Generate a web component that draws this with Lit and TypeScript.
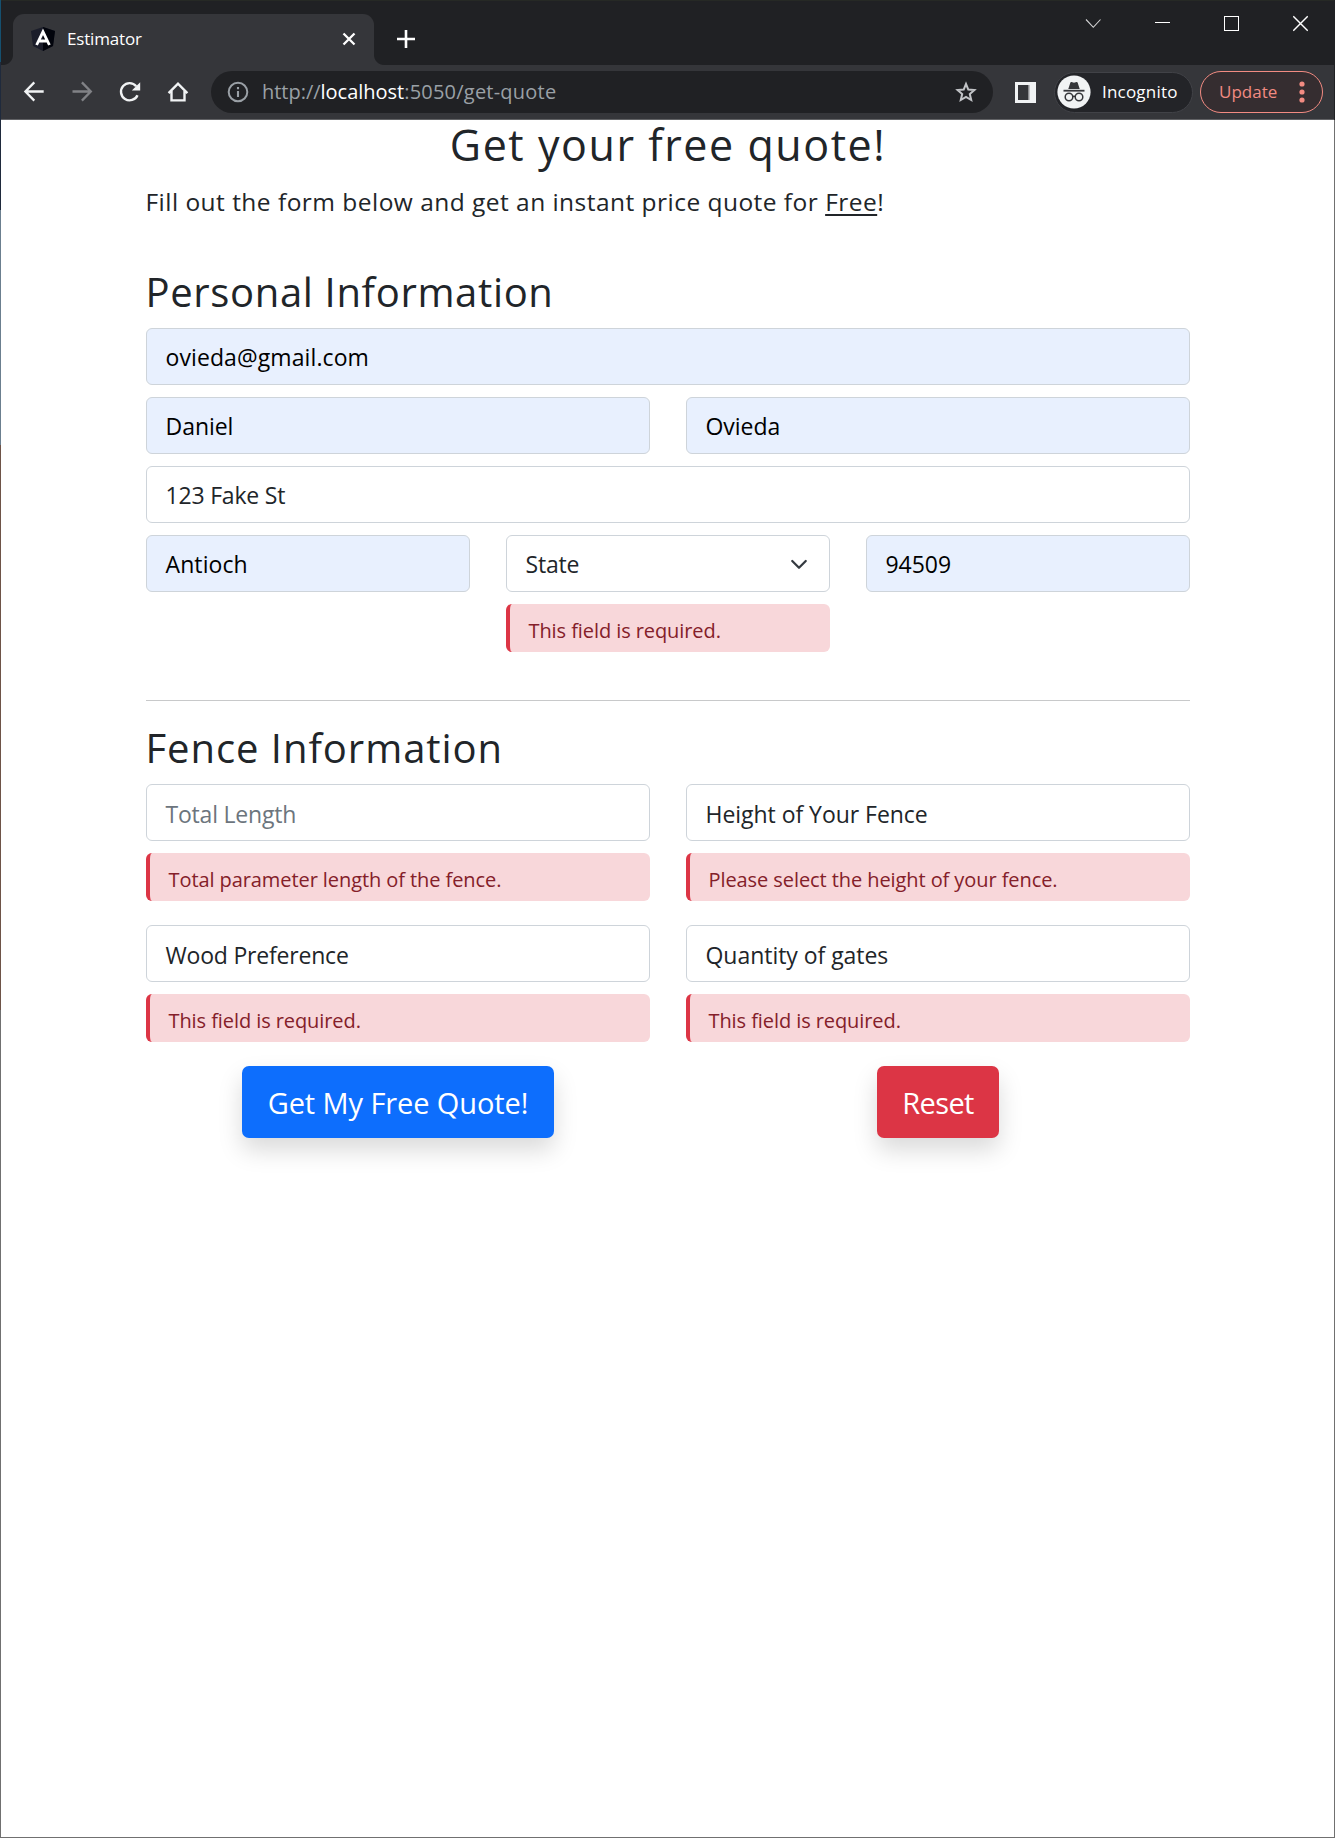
import { LitElement, html, css, nothing } from "lit";
import { customElement, property } from "lit/decorators.js";

/** Browser tab strip and toolbar. */
@customElement("browser-chrome")
export class BrowserChrome extends LitElement {
  static styles = css`
    :host {
      display: block;
      height: 120px;
      box-sizing: border-box;
      background: #35363a;
      border-bottom: 1px solid #616265;
      font-family: "Open Sans", "Noto Sans", sans-serif;
      color: #fff;
    }
    svg {
      display: block;
      flex: none;
    }
    .strip {
      height: 65px;
      box-sizing: border-box;
      background: #202124;
      display: flex;
      align-items: flex-start;
      padding-left: 3px;
      border-top: 1px solid #262925;
    }
    .foot {
      width: 10px;
      height: 10px;
      align-self: flex-end;
    }
    .foot-left {
      background: radial-gradient(circle at 0 0, #202124 9.5px, #35363a 10.5px);
      margin-left: -1px;
    }
    .foot-right {
      background: radial-gradient(circle at 100% 0, #202124 9.5px, #35363a 10.5px);
    }
    .tab {
      width: 361px;
      height: 51px;
      margin-top: 13px;
      box-sizing: border-box;
      background: #35363a;
      border-radius: 11px 11px 0 0;
      display: flex;
      align-items: center;
      padding: 0 18px 1px;
    }
    .tab-title {
      flex: 1;
      margin-left: 12px;
      font-size: 17px;
      line-height: 24px;
      letter-spacing: -0.18px;
    }
    .new-tab {
      margin: 28px 0 0 12px;
    }
    .window-controls {
      margin-left: auto;
      display: flex;
      gap: 54px;
      padding: 14px 26px 0 0;
    }
    .toolbar {
      height: 54px;
      display: flex;
      align-items: center;
      padding-left: 22px;
    }
    .nav {
      display: flex;
      gap: 26px;
    }
    .address {
      width: 782px;
      height: 42px;
      margin-left: 22px;
      box-sizing: border-box;
      border-radius: 21px;
      background: #202124;
      display: flex;
      align-items: center;
      padding: 0 16px;
    }
    .url {
      flex: 1;
      margin-left: 13px;
      font-size: 20px;
      line-height: 40px;
      letter-spacing: -0.02px;
      color: #9aa0a6;
      white-space: nowrap;
    }
    .host {
      color: #fff;
    }
    .path {
      letter-spacing: 0.22px;
    }
    .panel {
      margin-left: 22px;
    }
    .incognito {
      width: 139px;
      height: 41px;
      margin-left: 18px;
      box-sizing: border-box;
      border: 1px solid #414247;
      border-radius: 21px;
      background: #232428;
      display: flex;
      align-items: center;
      padding-left: 2px;
      font-size: 17px;
      letter-spacing: 0.2px;
    }
    .label {
      margin-left: 11px;
      line-height: 36px;
    }
    .update {
      width: 123px;
      height: 42px;
      margin-left: 7px;
      box-sizing: border-box;
      border: 1.5px solid #f28b82;
      border-radius: 21px;
      background: #352d30;
      color: #f28b82;
      display: flex;
      align-items: center;
      padding: 0 17px 1px 18px;
      font-size: 17px;
      justify-content: space-between;
    }
  `;

  render() {
    return html`
      <div class="strip">
        <span class="foot foot-left"></span>
        <div class="tab">
          <svg width="24" height="24" viewBox="0 0 24 24">
            <path d="M12 0 L24 4 L22 19 L12 24 L2 19 L0 4 Z" fill="#1b1d2a" />
            <path d="M12 0 L24 4 L22 19 L12 24 Z" fill="#02040c" />
            <path d="M5.6 18 L12 4.8 L18.4 18 M8.5 14 H15.5" fill="none" stroke="#fff" stroke-width="2.8" />
          </svg>
          <span class="tab-title">Estimator</span>
          <svg width="14" height="14" viewBox="0 0 14 14">
            <path d="M1.5 1.5 L12.5 12.5 M12.5 1.5 L1.5 12.5" stroke="#fff" stroke-width="2.3" />
          </svg>
        </div>
        <span class="foot foot-right"></span>
        <svg class="new-tab" width="20" height="20" viewBox="0 0 20 20">
          <path d="M10 1 V19 M1 10 H19" stroke="#fff" stroke-width="2.6" />
        </svg>
        <div class="window-controls">
          <svg width="16" height="18" viewBox="0 0 16 18">
            <path d="M1 4.5 L8.3 12.3 L15.5 4.5" fill="none" stroke="#d5d5d6" stroke-width="1.1" />
          </svg>
          <svg width="15" height="18" viewBox="0 0 15 18">
            <path d="M0 7.5 H15" stroke="#fff" stroke-width="1" />
          </svg>
          <svg width="15" height="18" viewBox="0 0 15 18">
            <rect x="0.5" y="1.5" width="14" height="14" fill="none" stroke="#fff" />
          </svg>
          <svg width="15" height="18" viewBox="0 0 15 18">
            <path d="M0.3 1.3 L14.7 15.7 M14.7 1.3 L0.3 15.7" stroke="#fff" stroke-width="1.3" />
          </svg>
        </div>
      </div>
      <div class="toolbar">
        <div class="nav">
          <svg width="22" height="22" viewBox="0 0 22 22">
            <path d="M20.7 10.5 H3 M11.3 1.4 L2.4 10.5 L11.3 19.6" fill="none" stroke="#f1f3f4" stroke-width="2.3" />
          </svg>
          <svg width="22" height="22" viewBox="0 0 22 22">
            <path d="M1.5 10.5 H19.2 M10.9 1.4 L19.8 10.5 L10.9 19.6" fill="none" stroke="#818286" stroke-width="2.3" />
          </svg>
          <svg width="22" height="22" viewBox="0 0 22 22">
            <path d="M18.5 14.2 A8.6 8.6 0 1 1 17.2 5.2" fill="none" stroke="#f1f3f4" stroke-width="2.4" />
            <path d="M21.2 1.2 V9.4 H12.8 Z" fill="#f1f3f4" />
          </svg>
          <svg width="22" height="22" viewBox="0 0 22 22">
            <path d="M1.6 12.1 L11 2.6 L20.4 12.1 M4.5 10 V19.4 H17.5 V10" fill="none" stroke="#f1f3f4" stroke-width="2.4" />
          </svg>
        </div>
        <div class="address">
          <svg width="22" height="22" viewBox="0 0 22 22">
            <circle cx="11" cy="11" r="9.3" fill="none" stroke="#9aa0a6" stroke-width="2" />
            <path d="M11 10 V16 M11 6 V8.2" stroke="#9aa0a6" stroke-width="2.1" />
          </svg>
          <span class="url">http://<span class="host">localhost</span><span class="path">:5050/get-quote</span></span>
          <svg width="22" height="22" viewBox="0 0 22 22">
            <path d="M11 3 L13.3 8.6 L19.4 9.1 L14.8 13.1 L16.2 19 L11 15.8 L5.8 19 L7.2 13.1 L2.6 9.1 L8.7 8.6 Z" fill="none" stroke="#c2c4c7" stroke-width="2" />
          </svg>
        </div>
        <svg class="panel" width="21" height="21" viewBox="0 0 21 21">
          <rect width="21" height="21" fill="#f1f3f4" />
          <rect x="3" y="3" width="10" height="15" fill="#35363a" />
          <rect x="13" y="3" width="1.5" height="15" fill="#8b8c8f" />
        </svg>
        <div class="incognito">
          <svg width="34" height="34" viewBox="0 0 34 34">
            <circle cx="17" cy="17" r="16.6" fill="#f1f3f4" />
            <path d="M11.3 14 L13.4 7.6 Q13.7 6.9 14.5 7.1 L17 7.8 L19.5 7.1 Q20.3 6.9 20.6 7.6 L22.7 14 Z" fill="#35363a" />
            <rect x="6.5" y="14.8" width="21" height="1.8" fill="#35363a" />
            <circle cx="12" cy="22" r="3.8" fill="none" stroke="#35363a" stroke-width="1.5" />
            <circle cx="22" cy="22" r="3.8" fill="none" stroke="#35363a" stroke-width="1.5" />
            <path d="M15.7 21.6 Q17 20.8 18.3 21.6" fill="none" stroke="#35363a" stroke-width="1.4" />
          </svg>
          <span class="label">Incognito</span>
        </div>
        <div class="update">
          <span>Update</span>
          <svg width="6" height="22" viewBox="0 0 6 22">
            <circle cx="3" cy="3" r="2.6" fill="#f28b82" />
            <circle cx="3" cy="11" r="2.6" fill="#f28b82" />
            <circle cx="3" cy="19" r="2.6" fill="#f28b82" />
          </svg>
        </div>
      </div>
    `;
  }
}

/** A form control with an optional validation message under it. */
@customElement("form-field")
export class FormField extends LitElement {
  @property() value = "";
  @property() placeholder = "";
  @property() error = "";
  @property() spacing = "normal";
  @property({ type: Boolean }) autofilled = false;
  @property({ type: Boolean }) dropdown = false;

  static styles = css`
    :host {
      display: block;
      font-family: "Open Sans", "Noto Sans", sans-serif;
    }
    .control {
      height: 57px;
      box-sizing: border-box;
      display: flex;
      align-items: center;
      justify-content: space-between;
      border: 1px solid #ced4da;
      border-radius: 6px;
      background: #fff;
      padding: var(--field-nudge, 2px) 21px 0 19px;
      font-size: 23px;
      line-height: 51px;
      color: #212529;
      white-space: nowrap;
    }
    .autofilled {
      background: #e8f0fe;
      color: #000;
    }
    .empty {
      color: #6c757d;
    }
    .normal {
      letter-spacing: -0.04px;
    }
    .tight {
      letter-spacing: -0.2px;
    }
    .loose {
      letter-spacing: 0.1px;
    }
    .error {
      height: 48px;
      margin-top: 12px;
      box-sizing: border-box;
      border-left: 4px solid #dc3545;
      border-radius: 6px;
      background: #f8d7da;
      color: #842029;
      padding: 5px 0 0 19px;
      font-size: 20px;
      line-height: 43px;
      letter-spacing: -0.08px;
      white-space: nowrap;
    }
  `;

  render() {
    const tone = this.autofilled ? "autofilled" : this.value ? "" : "empty";
    return html`
      <div class="control ${tone} ${this.spacing}">
        <span>${this.value || this.placeholder}</span>
        ${this.dropdown
          ? html`<svg width="18" height="18" viewBox="0 0 16 16">
              <path d="m2 4.5 6 6 6-6" fill="none" stroke="#343a40" stroke-width="2" stroke-linecap="round" stroke-linejoin="round" />
            </svg>`
          : nothing}
      </div>
      ${this.error ? html`<div class="error">${this.error}</div>` : nothing}
    `;
  }
}

@customElement("app-root")
export class AppRoot extends LitElement {
  static styles = css`
    :host {
      display: block;
      height: 1838px;
      box-sizing: border-box;
      background:
        linear-gradient(#15506f 0 62px, #1f2a3c 62px 210px, #6b7f8f 210px 445px, #6e5348 445px 1010px, #707070 1010px) 0 0 / 1px 100% no-repeat,
        linear-gradient(#202124 0 120px, #707070 120px);
      padding: 0 1px 1px;
    }
    .window {
      height: 1837px;
      background: #fff;
    }
    .page {
      width: 1044px;
      margin: 0 auto;
      color: #212529;
      font-family: "Open Sans", "Noto Sans", sans-serif;
    }
    h1,
    h2,
    p {
      margin: 0;
      font-weight: 400;
    }
    h1 {
      text-align: center;
      font-size: 43px;
      line-height: 50px;
      letter-spacing: 1.55px;
      padding-left: 1px;
    }
    p {
      margin-top: 14px;
      font-size: 24.5px;
      line-height: 36px;
      letter-spacing: 0.47px;
    }
    u {
      text-decoration-thickness: 2px;
      text-underline-offset: 3px;
      text-decoration-skip-ink: none;
    }
    h2 {
      font-size: 40px;
      line-height: 46px;
      letter-spacing: 0.95px;
      margin-bottom: 13px;
    }
    .personal {
      padding-top: 49px;
      padding-bottom: 48px;
      border-bottom: 1px solid #c8c9ca;
    }
    .personal h2 {
      letter-spacing: 0.65px;
    }
    .fence {
      padding-top: 24px;
      --field-nudge: 4px;
    }
    .stack {
      display: grid;
      gap: 12px;
    }
    .row {
      display: grid;
      grid-auto-flow: column;
      grid-auto-columns: 1fr;
      gap: 36px;
    }
    .row + .row {
      margin-top: 24px;
    }
    .cell {
      display: flex;
      justify-content: center;
    }
    .button {
      height: 72px;
      box-sizing: border-box;
      border: 0;
      border-radius: 7px;
      padding: 1px 0 0 1px;
      color: #fff;
      font-family: "Open Sans", "Noto Sans", sans-serif;
      font-size: 29px;
      line-height: 70px;
      letter-spacing: -0.1px;
      box-shadow: 0 12px 24px rgba(0, 0, 0, 0.15);
    }
    .submit {
      width: 312px;
      background: #0d6efd;
    }
    .reset {
      width: 122px;
      background: #dc3545;
      letter-spacing: -0.6px;
    }
  `;

  render() {
    return html`
      <div class="window">
        <browser-chrome></browser-chrome>
        <main class="page">
          <h1>Get your free quote!</h1>
          <p>Fill out the form below and get an instant price quote for <u>Free</u>!</p>
          <section class="personal">
            <h2>Personal Information</h2>
            <div class="stack">
              <form-field value="ovieda@gmail.com" spacing="loose" autofilled></form-field>
              <div class="row">
                <form-field value="Daniel" autofilled></form-field>
                <form-field value="Ovieda" autofilled></form-field>
              </div>
              <form-field value="123 Fake St" spacing="tight"></form-field>
              <div class="row">
                <form-field value="Antioch" spacing="loose" autofilled></form-field>
                <form-field value="State" spacing="tight" error="This field is required." dropdown></form-field>
                <form-field value="94509" autofilled></form-field>
              </div>
            </div>
          </section>
          <section class="fence">
            <h2>Fence Information</h2>
            <div class="row">
              <form-field placeholder="Total Length" spacing="tight" error="Total parameter length of the fence."></form-field>
              <form-field value="Height of Your Fence" error="Please select the height of your fence."></form-field>
            </div>
            <div class="row">
              <form-field value="Wood Preference" spacing="tight" error="This field is required."></form-field>
              <form-field value="Quantity of gates" error="This field is required."></form-field>
            </div>
            <div class="row">
              <div class="cell"><button class="button submit">Get My Free Quote!</button></div>
              <div class="cell"><button class="button reset">Reset</button></div>
            </div>
          </section>
        </main>
      </div>
    `;
  }
}
